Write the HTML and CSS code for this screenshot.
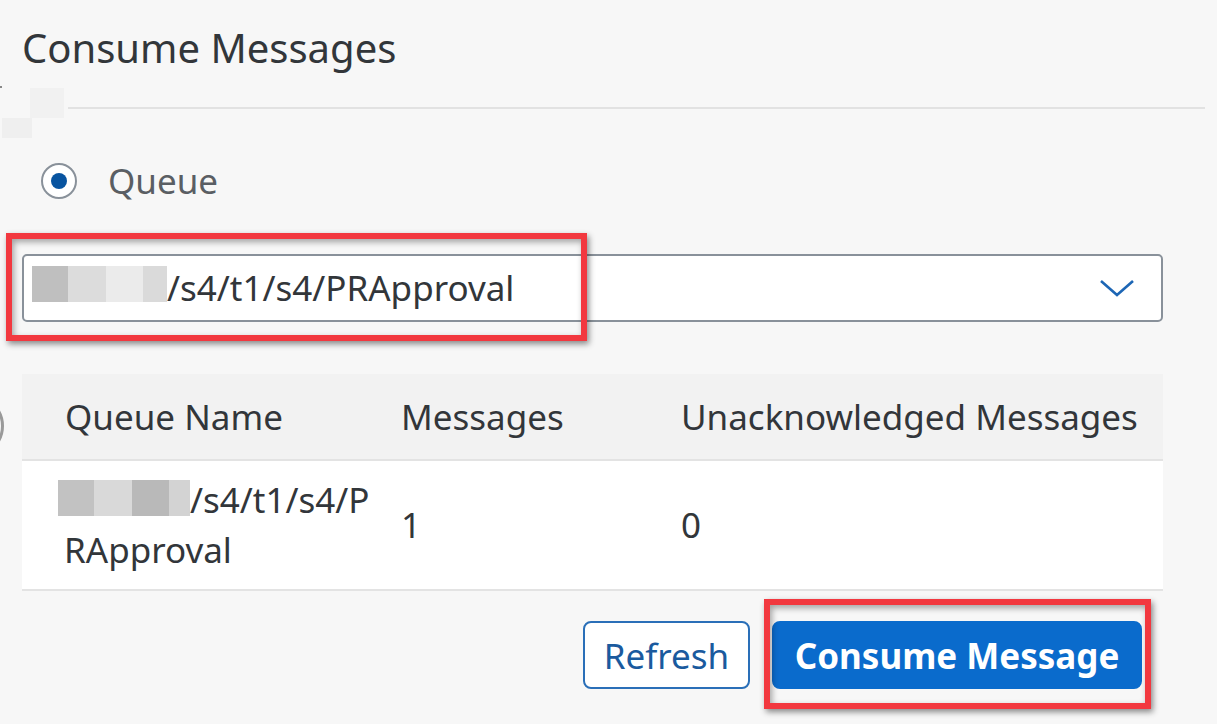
FILE: index.html
```html
<!DOCTYPE html>
<html>
<head>
<meta charset="utf-8">
<link rel="stylesheet" href="styles.css">
</head>
<body>
<div class="page">
  <div class="blur-left">
    <span class="bl b1"></span><span class="bl b2"></span><span class="bl b3"></span>
  </div>
  <h1 class="title">Consume Messages</h1>
  <div class="rule"></div>

  <div class="content">
    <label class="radio-row">
      <span class="radio"><span class="radio-dot"></span></span>
      <span class="radio-label">Queue</span>
    </label>

    <div class="select">
      <span class="select-value">
        <span class="mask">
          <span class="m m1"></span><span class="m m2"></span><span class="m m3"></span><span class="m m4"></span>
        </span>/s4/t1/s4/PRApproval
      </span>
      <svg class="chevron" width="36" height="20" viewBox="0 0 36 20">
        <path d="M2 3 L18 17 L34 3" fill="none" stroke="#1d66b5" stroke-width="2.6"/>
      </svg>
    </div>

    <div class="table">
      <div class="thead">
        <div class="cell c1">Queue Name</div>
        <div class="cell c2">Messages</div>
        <div class="cell c3">Unacknowledged Messages</div>
      </div>
      <div class="trow">
        <div class="cell c1 name"><span class="line1"><span class="mask mask2"><span class="m n1"></span><span class="m n2"></span><span class="m n3"></span><span class="m n4"></span></span>/s4/t1/s4/P</span><span class="line2">RApproval</span></div>
        <div class="cell c2">1</div>
        <div class="cell c3">0</div>
      </div>
    </div>

    <div class="actions">
      <button class="btn btn-ghost">Refresh</button>
      <button class="btn btn-primary">Consume Message</button>
    </div>
  </div>

  <div class="edge-circle"></div>
  <div class="hl hl-select"></div>
  <div class="hl hl-button"></div>
</div>
</body>
</html>
```

FILE: styles.css
```css
html, body {
  margin: 0;
  padding: 0;
  background: #f7f7f7;
}
.page {
  position: relative;
  width: 1217px;
  height: 724px;
  overflow: hidden;
  font-family: "Noto Sans", "Open Sans", sans-serif;
  color: #32363a;
}
.title {
  margin: 0;
  padding: 20px 0 0 22px;
  font-size: 40px;
  font-weight: 400;
  line-height: 56px;
  color: #32363a;
}
.rule {
  margin: 31px 12px 0 68px;
  height: 2px;
  background: #e2e2e2;
}
.blur-left {
  position: absolute;
  left: 0;
  top: 86px;
  width: 85px;
  height: 84px;
}
.bl { position: absolute; display: block; }
.b1 { left: 30px; top: 2px; width: 34px; height: 30px; background: #f1f1f1; }
.b2 { left: 2px; top: 32px; width: 30px; height: 20px; background: #efefef; }
.b3 { left: 0px; top: 0px; width: 2px; height: 2px; background: #888; }

.content {
  padding: 0 54px 0 22px;
}
.radio-row {
  display: flex;
  align-items: center;
  gap: 31px;
  height: 70px;
  margin-top: 37px;
  padding-left: 19px;
}
.radio {
  width: 36px;
  height: 36px;
  border: 2px solid #89919a;
  border-radius: 50%;
  background: #fff;
  display: flex;
  align-items: center;
  justify-content: center;
  box-sizing: border-box;
}
.radio-dot {
  width: 16px;
  height: 16px;
  border-radius: 50%;
  background: #0854a0;
}
.radio-label {
  font-size: 35px;
  line-height: 48px;
  color: #5a5e63;
}
.select {
  margin-top: 38px;
  height: 68px;
  box-sizing: border-box;
  border: 2px solid #89919a;
  border-radius: 5px;
  background: #fff;
  display: flex;
  align-items: center;
  justify-content: space-between;
  padding: 0 26px 0 8px;
}
.select-value {
  display: flex;
  align-items: center;
  font-size: 35px;
  line-height: 48px;
  color: #32363a;
}
.mask {
  display: inline-flex;
  height: 36px;
  margin-top: -8px;
}
.m { display: block; height: 100%; }
.m1 { width: 36px; background: #bfbfbf; }
.m2 { width: 38px; background: #dcdcdc; }
.m3 { width: 37px; background: #ebebeb; }
.m4 { width: 24px; background: #dadada; }

.table {
  margin-top: 52px;
  background: #fff;
}
.thead {
  display: flex;
  background: #f2f2f2;
  align-items: center;
  border-bottom: 2px solid #e3e3e3;
  box-sizing: border-box;
  height: 87px;
}
.trow {
  display: flex;
  align-items: center;
  height: 130px;
  box-sizing: border-box;
  border-bottom: 2px solid #e3e3e3;
}
.cell {
  font-size: 35px;
  line-height: 48px;
  color: #32363a;
}
.c1 { width: 336px; padding-left: 43px; box-sizing: border-box; }
.c2 { width: 280px; padding-left: 43px; box-sizing: border-box; }
.c3 { flex: 1; padding-left: 43px; box-sizing: border-box; }
.trow .c1 { padding-left: 36px; }
.name { display: flex; flex-direction: column; line-height: 50px; }
.line1 { display: flex; align-items: center; white-space: nowrap; }
.line2 { display: block; margin-left: 6px; }
.mask2 { height: 36px; margin-top: -4px; }
.n1 { width: 36px; background: #c2c2c2; }
.n2 { width: 38px; background: #d9d9d9; }
.n3 { width: 37px; background: #b9b9b9; }
.n4 { width: 21px; background: #d3d3d3; }

.actions {
  display: flex;
  justify-content: flex-end;
  gap: 22px;
  margin-top: 30px;
  padding-right: 21px;
}
.btn {
  height: 68px;
  border-radius: 8px;
  font-family: "Noto Sans", "Open Sans", sans-serif;
  font-size: 35px;
  padding: 0 10px;
  cursor: pointer;
  box-sizing: border-box;
}
.btn-ghost {
  width: 167px;
  background: #fff;
  border: 2px solid #2a6fb8;
  color: #1a5a9e;
}
.btn-primary {
  width: 370px;
  background: #0a6bcc;
  border: 2px solid #0a6bcc;
  color: #fff;
  font-weight: 700;
}
.edge-circle {
  position: absolute;
  left: -58px;
  top: 395px;
  width: 62px;
  height: 62px;
  border: 3px solid #9a9a9a;
  border-radius: 50%;
  box-sizing: border-box;
}
.hl {
  position: absolute;
  border: 6px solid #f2383f;
  box-shadow: 2px 3px 6px rgba(0,0,0,0.45), inset 2px 3px 6px rgba(0,0,0,0.35);
  box-sizing: border-box;
}
.hl-select {
  left: 6px;
  top: 233px;
  width: 581px;
  height: 108px;
}
.hl-button {
  left: 764px;
  top: 599px;
  width: 387px;
  height: 110px;
}
```
